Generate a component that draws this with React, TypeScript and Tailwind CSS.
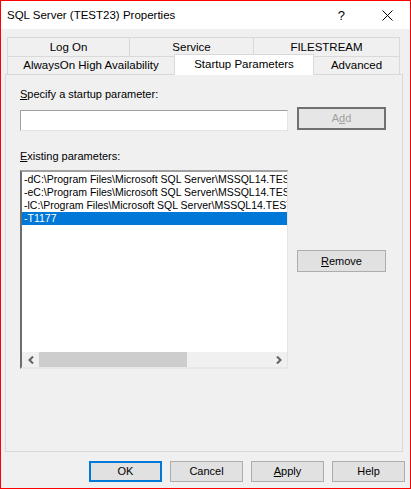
import React from "react";

const items = [
  "-dC:\\Program Files\\Microsoft SQL Server\\MSSQL14.TES",
  "-eC:\\Program Files\\Microsoft SQL Server\\MSSQL14.TES",
  "-lC:\\Program Files\\Microsoft SQL Server\\MSSQL14.TEST",
  "-T1177",
];

function Btn({ children, cls }: { children: React.ReactNode; cls: string }) {
  return (
    <div className={`flex items-center justify-center text-[11px] text-black bg-[#e1e1e1] ${cls}`}>
      {children}
    </div>
  );
}

export default function App() {
  return (
    <div className="w-[411px] h-[489px] border border-[#ff0000] bg-[#f0f0f0] flex flex-col font-['Liberation_Sans',Arial,sans-serif] text-black select-none">
      {/* Title bar */}
      <div className="h-[28px] bg-white flex items-center shrink-0">
        <div className="pl-[6px] flex-1 text-[11.5px] leading-none pt-[1px]">SQL Server (TEST23) Properties</div>
        <div className="text-[13px] leading-none mr-[37px]">?</div>
        <svg width="11" height="11" viewBox="0 0 11 11" className="mr-[17px]">
          <path d="M0.5 0.5 L10.5 10.5 M10.5 0.5 L0.5 10.5" stroke="#000" strokeWidth="1" />
        </svg>
      </div>

      {/* Tabs */}
      <div className="ml-[6px] mt-[8px] text-[11.5px]">
        <div className="flex h-[19px]">
          <div className="w-[122px] border-t border-l border-[#d9d9d9] flex items-center justify-center pt-[1px]">Log On</div>
          <div className="w-[124px] border-t border-l border-[#d9d9d9] flex items-center justify-center pt-[1px]">Service</div>
          <div className="w-[147px] border-t border-l border-r border-[#d9d9d9] flex items-center justify-center pt-[1px]">FILESTREAM</div>
        </div>
        <div className="flex h-[18px] items-start">
          <div className="w-[167px] h-[18px] border-t border-l border-[#d9d9d9] flex items-center justify-center pt-[1px]">AlwaysOn High Availability</div>
          <div className="w-[140px] h-[21px] -mt-[2px] relative z-10 bg-white border-t border-l border-r border-[#d9d9d9] flex items-center justify-center pb-[1px]">Startup Parameters</div>
          <div className="w-[86px] h-[18px] border-t border-r border-[#d9d9d9] flex items-center justify-center pt-[1px]">Advanced</div>
        </div>
      </div>

      {/* Panel */}
      <div className="ml-[4px] w-[398px] h-[378px] border border-[#d9d9d9] shrink-0">
        <div className="pl-[14px] text-[11px]">
          <div className="mt-[13px] h-[13px] leading-[13px]">
            <span className="underline">S</span>pecify a startup parameter:
          </div>
          <div className="mt-[6px] flex items-start">
            <div className="mt-[3px] w-[268px] h-[21px] bg-white border-t border-l border-[#a0a0a0] border-b border-r border-b-[#e3e3e3] border-r-[#e3e3e3]" />
            <div className="ml-[9px] w-[89px] h-[23px] border-2 border-[#707070] bg-[#e6e6e6] flex items-center justify-center text-[#a0a0a0]">
              A<span className="underline">d</span>d
            </div>
          </div>
          <div className="mt-[19px] h-[13px] leading-[13px]">
            <span className="underline">E</span>xisting parameters:
          </div>
          <div className="mt-[7px] flex items-start">
            <div className="w-[268px] h-[199px] bg-white border-t-2 border-l-2 border-t-[#a0a0a0] border-l-[#6d6d6d] border-r border-r-[#e3e3e3] border-b-2 border-b-[#e8e8e8] flex flex-col">
              <div className="flex-1 overflow-hidden pt-[1px]">
                {items.map((t, i) => (
                  <div
                    key={i}
                    className={`h-[13px] leading-[13px] pl-[2px] whitespace-nowrap overflow-hidden text-[10.5px] ${
                      i === 3 ? "bg-[#0078d7] text-white" : ""
                    }`}
                  >
                    {t}
                  </div>
                ))}
              </div>
              <div className="h-[15px] flex bg-[#f0f0f0] shrink-0">
                <div className="w-[17px] flex items-center justify-center">
                  <svg width="6" height="8" viewBox="0 0 6 8">
                    <path d="M5 0.5 L1.5 4 L5 7.5" stroke="#606060" strokeWidth="2" fill="none" />
                  </svg>
                </div>
                <div className="w-[148px] bg-[#cdcdcd]" />
                <div className="flex-1" />
                <div className="w-[17px] flex items-center justify-center">
                  <svg width="6" height="8" viewBox="0 0 6 8">
                    <path d="M1 0.5 L4.5 4 L1 7.5" stroke="#606060" strokeWidth="2" fill="none" />
                  </svg>
                </div>
              </div>
            </div>
            <Btn cls="ml-[9px] mt-[80px] w-[89px] h-[22px] border border-[#adadad]">
              <span className="underline">R</span>emove
            </Btn>
          </div>
        </div>
      </div>

      {/* Bottom buttons */}
      <div className="mt-[9px] flex justify-end gap-[8px] pr-[5px]">
        <Btn cls="w-[73px] h-[21px] border-2 border-[#0078d7]">OK</Btn>
        <Btn cls="w-[73px] h-[21px] border border-[#adadad]">Cancel</Btn>
        <Btn cls="w-[73px] h-[21px] border border-[#adadad]">
          <span className="underline">A</span>pply
        </Btn>
        <Btn cls="w-[73px] h-[21px] border border-[#adadad]">Help</Btn>
      </div>
    </div>
  );
}
